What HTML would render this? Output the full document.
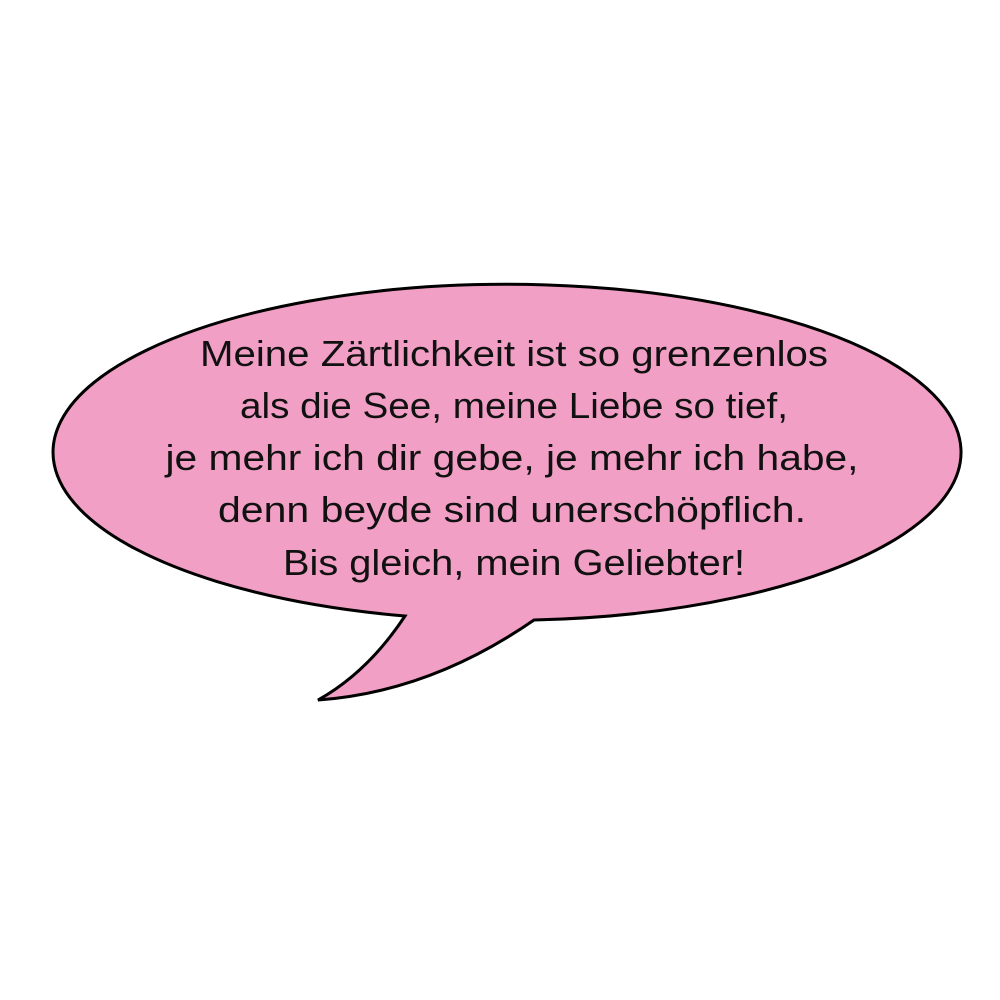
<!DOCTYPE html>
<html><head><style>
html,body{margin:0;padding:0;background:#fff;width:1000px;height:1000px;overflow:hidden}
svg{display:block}
</style></head><body>
<svg width="1000" height="1000" viewBox="0 0 1000 1000">
<path d="M534,620 A454,168 0 1 0 405,616 Q368,672 318,700 Q430,692 534,620 Z" fill="#f19fc5" stroke="#000" stroke-width="3" stroke-linejoin="miter"/>
<g font-family="'Liberation Sans',sans-serif" font-size="36" fill="#111" text-anchor="middle" lengthAdjust="spacingAndGlyphs">
<text x="514" y="366" textLength="628" lengthAdjust="spacingAndGlyphs">Meine Zärtlichkeit ist so grenzenlos</text>
<text x="514" y="418" textLength="548" lengthAdjust="spacingAndGlyphs">als die See, meine Liebe so tief,</text>
<text x="512" y="470" textLength="693" lengthAdjust="spacingAndGlyphs">je mehr ich dir gebe, je mehr ich habe,</text>
<text x="512" y="522" textLength="588" lengthAdjust="spacingAndGlyphs">denn beyde sind unerschöpflich.</text>
<text x="514" y="575" textLength="462" lengthAdjust="spacingAndGlyphs">Bis gleich, mein Geliebter!</text>
</g>
</svg>
</body></html>
